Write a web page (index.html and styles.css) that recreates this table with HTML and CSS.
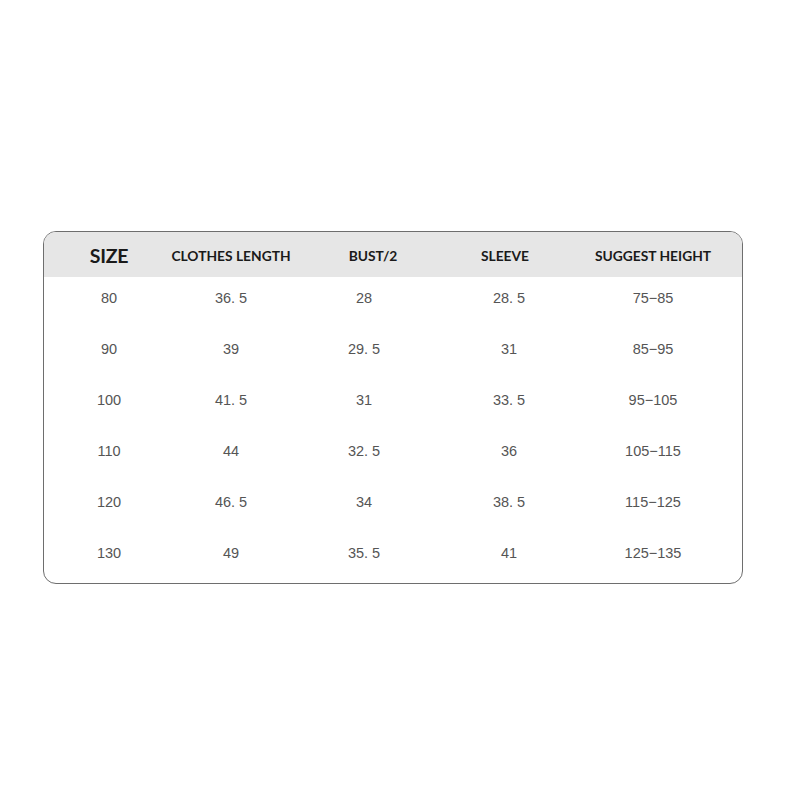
FILE: index.html
```html
<!DOCTYPE html>
<html>
<head>
<meta charset="utf-8">
<link rel="stylesheet" href="styles.css">
</head>
<body>
<div class="page">
  <div class="chart">
    <div class="row head">
      <div class="cell size">SIZE</div>
      <div class="cell">CLOTHES LENGTH</div>
      <div class="cell bust">BUST/2</div>
      <div class="cell sleeve">SLEEVE</div>
      <div class="cell">SUGGEST HEIGHT</div>
    </div>
    <div class="row">
      <div class="cell">80</div><div class="cell">36. 5</div><div class="cell">28</div><div class="cell">28. 5</div><div class="cell">75−85</div>
    </div>
    <div class="row">
      <div class="cell">90</div><div class="cell">39</div><div class="cell">29. 5</div><div class="cell">31</div><div class="cell">85−95</div>
    </div>
    <div class="row">
      <div class="cell">100</div><div class="cell">41. 5</div><div class="cell">31</div><div class="cell">33. 5</div><div class="cell">95−105</div>
    </div>
    <div class="row">
      <div class="cell">110</div><div class="cell">44</div><div class="cell">32. 5</div><div class="cell">36</div><div class="cell">105−115</div>
    </div>
    <div class="row">
      <div class="cell">120</div><div class="cell">46. 5</div><div class="cell">34</div><div class="cell">38. 5</div><div class="cell">115−125</div>
    </div>
    <div class="row">
      <div class="cell">130</div><div class="cell">49</div><div class="cell">35. 5</div><div class="cell">41</div><div class="cell">125−135</div>
    </div>
  </div>
</div>
</body>
</html>
```
FILE: styles.css
```css
html, body {
  margin: 0;
  padding: 0;
  background: #ffffff;
}
.page {
  width: 800px;
  height: 800px;
  padding: 231px 0 0 43px;
  box-sizing: border-box;
}
.chart {
  width: 700px;
  height: 353px;
  box-sizing: border-box;
  border: 1.5px solid #6e6e6e;
  border-radius: 13px;
  overflow: hidden;
  background: #fff;
  font-family: "Liberation Sans", Arial, sans-serif;
}
.row {
  display: grid;
  grid-template-columns: 130px 114px 152px 138px 150px;
  height: 51px;
  line-height: 42px;
  font-size: 14.5px;
  color: #555;
}
.cell {
  display: flex;
  justify-content: center;
  white-space: nowrap;
}
.row.head {
  height: 45px;
  line-height: 47px;
  background: #e6e6e6;
  font-family: "Lato", "Open Sans", sans-serif;
  font-weight: 700;
  font-size: 13.8px;
  color: #1a1a1a;
  letter-spacing: 0;
}
.row.head .size {
  font-size: 19.5px;
  letter-spacing: -0.3px;
}
.row.head .bust {
  padding-left: 18px;
}
.row.head .sleeve {
  padding-right: 8px;
}
```
